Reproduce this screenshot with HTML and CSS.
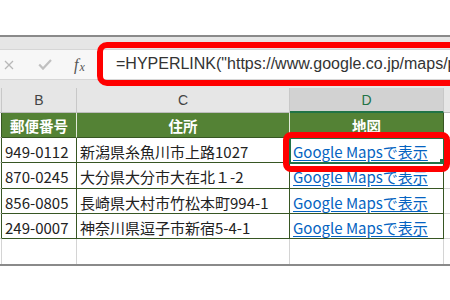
FILE: index.html
```html
<!DOCTYPE html>
<html lang="ja">
<head>
<meta charset="utf-8">
<title>HYPERLINK</title>
<link rel="stylesheet" href="styles.css">
</head>
<body>
<div class="top"></div>
<div class="window">
  <div class="band"></div>
  <div class="fbar">
    <div class="btns">
      <span class="btn cancel"><svg width="10" height="10" viewBox="0 0 10 10"><path d="M1 1L9 9M9 1L1 9" stroke="#b8b8b8" stroke-width="1.3" fill="none"/></svg></span>
      <span class="btn ok"><svg width="14" height="11" viewBox="0 0 14 11"><path d="M1.2 5.6L5 9.6L13 1" stroke="#c0c0c0" stroke-width="2.2" fill="none"/></svg></span>
      <span class="btn fx">f<span class="fx-x">x</span></span>
    </div>
    <div class="input">=HYPERLINK("https://www.google.co.jp/maps/place/新潟県糸魚川市上路1027","Google Mapsで表示")</div>
  </div>
  <div class="gap"></div>
  <div class="sheet">
    <div class="c hd stub"></div>
    <div class="c hd">B</div>
    <div class="c hd">C</div>
    <div class="c hd hd-sel">D</div>
    <div class="c hd hd-e"></div>

    <div class="c a"></div>
    <div class="c th">郵便番号</div>
    <div class="c th">住所</div>
    <div class="c th th-last">地図</div>
    <div class="c e"></div>

    <div class="c a"></div>
    <div class="c td">949-0112</div>
    <div class="c td">新潟県糸魚川市上路1027</div>
    <div class="c td sel"><span class="link">Google Mapsで表示</span></div>
    <div class="c e"></div>

    <div class="c a"></div>
    <div class="c td">870-0245</div>
    <div class="c td">大分県大分市大在北１-2</div>
    <div class="c td"><span class="link">Google Mapsで表示</span></div>
    <div class="c e"></div>

    <div class="c a"></div>
    <div class="c td">856-0805</div>
    <div class="c td">長崎県大村市竹松本町994-1</div>
    <div class="c td"><span class="link">Google Mapsで表示</span></div>
    <div class="c e"></div>

    <div class="c a"></div>
    <div class="c td">249-0007</div>
    <div class="c td">神奈川県逗子市新宿5-4-1</div>
    <div class="c td"><span class="link">Google Mapsで表示</span></div>
    <div class="c e"></div>

    <div class="c em"></div>
    <div class="c em"></div>
    <div class="c em"></div>
    <div class="c em"></div>
    <div class="c em em-last"></div>
  </div>
</div>
<div class="redbox formula-box"></div>
<div class="redbox cell-box"></div>
</body>
</html>
```
FILE: styles.css
```css
html, body {
  margin: 0;
  padding: 0;
}
body {
  width: 450px;
  height: 300px;
  overflow: hidden;
  position: relative;
  background: #ffffff;
  font-family: "Noto Sans CJK JP", sans-serif;
}
.top {
  height: 35px;
}
.window {
  border-top: 2px solid #8a8a8a;
  border-bottom: 2px solid #8a8a8a;
  background: #e6e6e6;
}
.band {
  height: 12px;
}
.fbar {
  height: 29px;
  display: flex;
  border-top: 1px solid #d6d6d6;
  border-bottom: 1px solid #d6d6d6;
  background: #f7f7f7;
}
.btns {
  width: 100px;
  display: flex;
  align-items: center;
}
.btn {
  display: flex;
  align-items: center;
}
.cancel {
  margin-left: 4px;
}
.ok {
  margin-left: 24px;
}
.fx {
  margin-left: 22px;
  font-family: "Liberation Serif", serif;
  font-style: italic;
  font-size: 16px;
  color: #555555;
  line-height: 1;
}
.fx-x {
  font-size: 12px;
  position: relative;
  top: 2px;
  margin-left: 1px;
}
.input {
  flex: 1;
  background: #ffffff;
  padding-left: 16px;
  display: flex;
  align-items: center;
  font-family: "Liberation Sans", sans-serif;
  font-size: 16px;
  color: #333333;
  white-space: nowrap;
  overflow: hidden;
}
.gap {
  height: 8px;
}
.sheet {
  display: grid;
  grid-template-columns: 2px 75px 213px 154px 6px;
  grid-template-rows: 25px 25px 25px 26px 25px 25px 25px;
  background: #ffffff;
}
.c {
  box-sizing: border-box;
  display: flex;
  align-items: center;
  overflow: hidden;
  white-space: nowrap;
  min-width: 0;
}
.hd {
  background: #e6e6e6;
  border-right: 1px solid #c8c8c8;
  border-bottom: 1px solid #bdbdbd;
  justify-content: center;
  font-family: "Liberation Sans", sans-serif;
  font-size: 14px;
  color: #444444;
}
.hd-sel {
  background: #d2d2d2;
  color: #217346;
  border-bottom: 2px solid #217346;
}
.hd-e {
  border-right: none;
}
.a {
  border-right: 1px solid #375623;
  border-bottom: 1px solid #d4d4d4;
}
.e {
  border-bottom: 1px solid #d4d4d4;
}
.th {
  background: #548235;
  color: #ffffff;
  font-weight: bold;
  font-size: 14.5px;
  justify-content: center;
  border-right: 1px solid #e2ead9;
  border-bottom: 1px solid #375623;
}
.th-last {
  border-right: 1px solid #375623;
}
.td {
  font-size: 15px;
  color: #222222;
  padding: 2px 0 0 3px;
  border-right: 1px solid #375623;
  border-bottom: 1px solid #375623;
}
.link {
  color: #0563c1;
  text-decoration: underline;
  text-underline-offset: 2px;
}
.sel {
  position: relative;
  outline: 2px solid #217346;
  outline-offset: -1px;
}
.sel::after {
  content: "";
  position: absolute;
  right: -3px;
  bottom: -3px;
  width: 5px;
  height: 5px;
  background: #217346;
  border: 1px solid #ffffff;
}
.em {
  border-right: 1px solid #d4d4d4;
}
.em-last {
  border-right: none;
}
.redbox {
  position: absolute;
  box-sizing: border-box;
  border: 6px solid #ff0000;
}
.formula-box {
  left: 97px;
  top: 42px;
  width: 380px;
  height: 44px;
  border-radius: 10px;
}
.cell-box {
  left: 283px;
  top: 132px;
  width: 167px;
  height: 40px;
  border-radius: 8px;
}
```
